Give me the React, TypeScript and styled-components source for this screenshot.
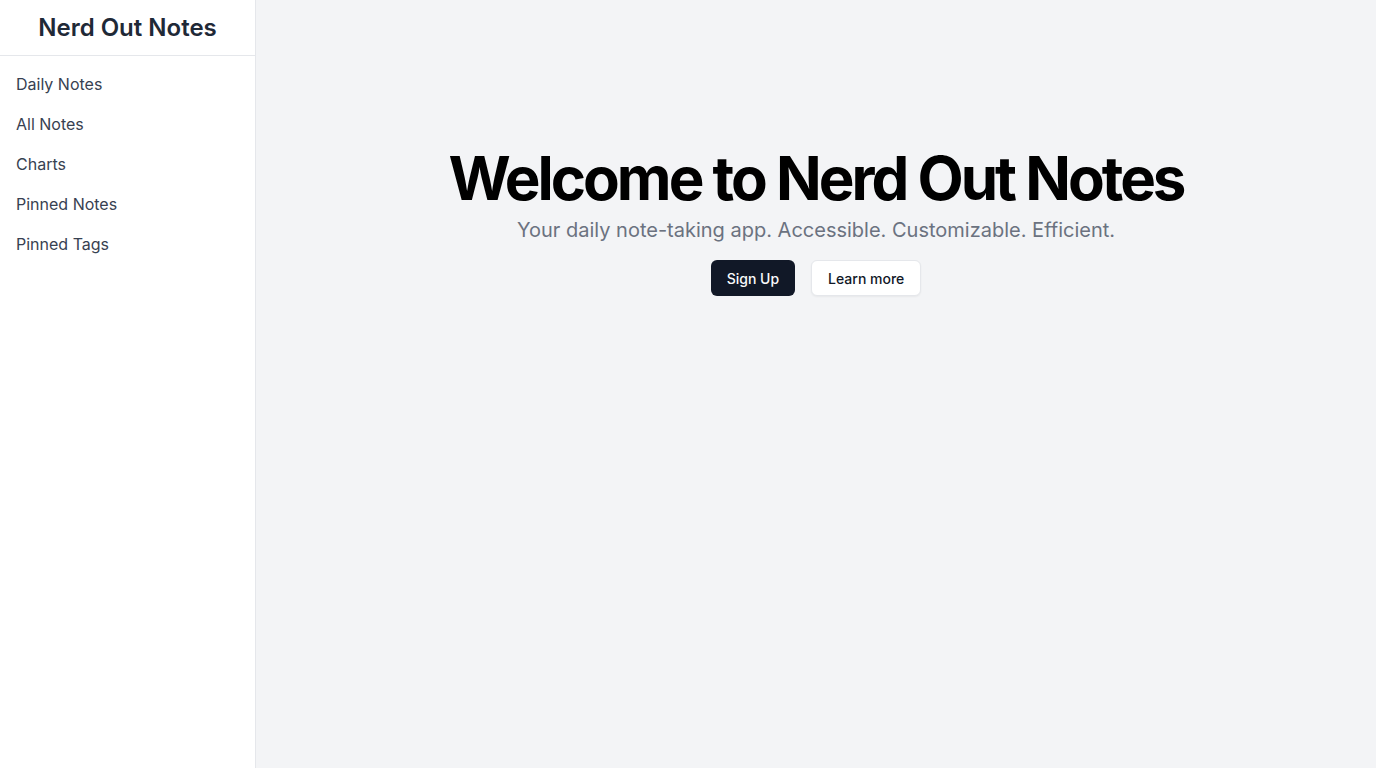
import React from "react";
import styled, { createGlobalStyle } from "styled-components";

const GlobalStyle = createGlobalStyle`
  html, body { margin: 0; padding: 0; }
  body { font-family: Inter, "Noto Sans", sans-serif; }
  * { box-sizing: border-box; }
`;

const Layout = styled.div`
  display: flex;
  width: 100vw;
  height: 100vh;
  overflow: hidden;
`;

const Sidebar = styled.aside`
  width: 256px;
  flex-shrink: 0;
  background: #ffffff;
  border-right: 1px solid #e5e7eb;
  display: flex;
  flex-direction: column;
`;

const Brand = styled.div`
  height: 56px;
  display: flex;
  align-items: center;
  justify-content: center;
  border-bottom: 1px solid #e5e7eb;
  font-size: 24px;
  font-weight: 600;
  color: #1f2937;
`;

const Nav = styled.nav`
  display: flex;
  flex-direction: column;
  padding: 8px 0;
`;

const NavItem = styled.a`
  display: block;
  padding: 8px 16px;
  font-size: 16px;
  line-height: 24px;
  color: #374151;
  text-decoration: none;
  cursor: pointer;
`;

const Main = styled.main`
  flex: 1;
  background: #f3f4f6;
  display: flex;
  flex-direction: column;
  align-items: center;
  padding-top: 148px;
`;

const Heading = styled.h1`
  margin: 0;
  font-size: 60px;
  line-height: 60px;
  font-weight: 700;
  letter-spacing: -0.05em;
  color: #000000;
`;

const Subtitle = styled.p`
  margin: 8px 0 0;
  font-size: 20px;
  line-height: 28px;
  color: #6b7280;
`;

const Actions = styled.div`
  display: flex;
  gap: 16px;
  margin-top: 16px;
`;

const Button = styled.button<{ $primary?: boolean }>`
  height: 36px;
  padding: 0 16px;
  border-radius: 6px;
  font-family: inherit;
  font-size: 14px;
  font-weight: 500;
  cursor: pointer;
  border: ${(p) => (p.$primary ? "none" : "1px solid #e5e7eb")};
  background: ${(p) => (p.$primary ? "#111827" : "#ffffff")};
  color: ${(p) => (p.$primary ? "#f9fafb" : "#111827")};
  box-shadow: ${(p) => (p.$primary ? "none" : "0 1px 2px rgba(0,0,0,0.05)")};
`;

const navItems = ["Daily Notes", "All Notes", "Charts", "Pinned Notes", "Pinned Tags"];

export default function App() {
  return (
    <>
      <GlobalStyle />
      <Layout>
        <Sidebar>
          <Brand>Nerd Out Notes</Brand>
          <Nav>
            {navItems.map((n) => (
              <NavItem key={n}>{n}</NavItem>
            ))}
          </Nav>
        </Sidebar>
        <Main>
          <Heading>Welcome to Nerd Out Notes</Heading>
          <Subtitle>Your daily note-taking app. Accessible. Customizable. Efficient.</Subtitle>
          <Actions>
            <Button $primary>Sign Up</Button>
            <Button>Learn more</Button>
          </Actions>
        </Main>
      </Layout>
    </>
  );
}
